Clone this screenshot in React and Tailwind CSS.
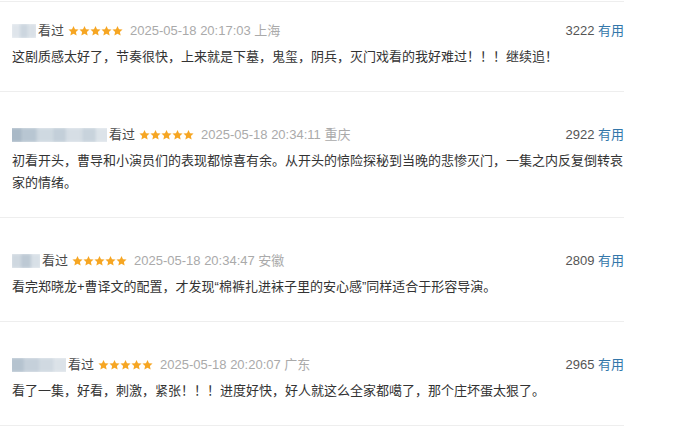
import React from 'react';

const reviews = [
  {
    blur: ['#dfe5eb', '#ccd6df', '#d9e0e7'],
    blurWidth: 'w-[24px]',
    time: '2025-05-18 20:17:03',
    place: '上海',
    votes: 3222,
    text: '这剧质感太好了，节奏很快，上来就是下墓，鬼玺，阴兵，灭门戏看的我好难过！！！继续追！',
  },
  {
    blur: ['#a9b9c7', '#b8c6d2', '#cfd9e1', '#c3cfd9', '#d6dee5', '#c8d3dc', '#dce3e9'],
    blurWidth: 'w-[95px]',
    time: '2025-05-18 20:34:11',
    place: '重庆',
    votes: 2922,
    text: '初看开头，曹导和小演员们的表现都惊喜有余。从开头的惊险探秘到当晚的悲惨灭门，一集之内反复倒转哀家的情绪。',
  },
  {
    blur: ['#cfd8e0', '#bdc9d4', '#d8e0e7'],
    blurWidth: 'w-[28px]',
    time: '2025-05-18 20:34:47',
    place: '安徽',
    votes: 2809,
    text: '看完郑晓龙+曹译文的配置，才发现“棉裤扎进袜子里的安心感”同样适合于形容导演。',
  },
  {
    blur: ['#b5c3cf', '#c5d0da', '#d0d9e1', '#dbe2e8'],
    blurWidth: 'w-[54px]',
    time: '2025-05-18 20:20:07',
    place: '广东',
    votes: 2965,
    text: '看了一集，好看，刺激，紧张！！！进度好快，好人就这么全家都噶了，那个庄坏蛋太狠了。',
  },
];

const Star = () => (
  <svg viewBox="0 0 24 24" className="w-[11px] h-[12px]">
    <path
      d="M12 1l3.3 7 7.7.8-5.8 5.2 1.7 7.6L12 17.8l-6.9 3.8 1.7-7.6L1 8.8l7.7-.8z"
      fill="#f6a623"
    />
  </svg>
);

const BlurName = ({ colors, width }) => (
  <div className={`${width} h-[14px] overflow-hidden`}>
    <div className="flex h-full blur-[1.5px] scale-110">
      {colors.map((c, i) => (
        <div key={i} className="flex-1 h-full" style={{ backgroundColor: c }} />
      ))}
    </div>
  </div>
);

const Review = ({ review, first }) => (
  <div
    className={`border-t border-[#eeeeee] pl-3 pb-[23px] ${first ? 'pt-[19px]' : 'pt-[33px]'}`}
  >
    {/* header row */}
    <div className="flex items-center justify-between h-5 text-[13px]">
      <div className="flex items-center">
        <BlurName colors={review.blur} width={review.blurWidth} />
        <span className="text-[#494949] ml-[2px]">看过</span>
        <span className="flex ml-[4px]">
          <Star /><Star /><Star /><Star /><Star />
        </span>
        <span className="text-[#aaaaaa] ml-[7px]">
          {review.time} {review.place}
        </span>
      </div>
      <div>
        <span className="text-[#555555]">{review.votes}</span>{' '}
        <span className="text-[#3377aa]">有用</span>
      </div>
    </div>
    {/* content */}
    <p className="mt-[5px] text-[13px] leading-[22px] text-[#333333]">{review.text}</p>
  </div>
);

export default function App() {
  return (
    <div
      className="w-[675px] h-[427px] bg-white overflow-hidden"
      style={{ fontFamily: '"Liberation Sans", "Noto Sans CJK SC", sans-serif' }}
    >
      <div className="w-[624px] mt-px">
        {reviews.map((r, i) => (
          <Review key={i} review={r} first={i === 0} />
        ))}
        <div className="border-t border-[#eeeeee]" />
      </div>
    </div>
  );
}
